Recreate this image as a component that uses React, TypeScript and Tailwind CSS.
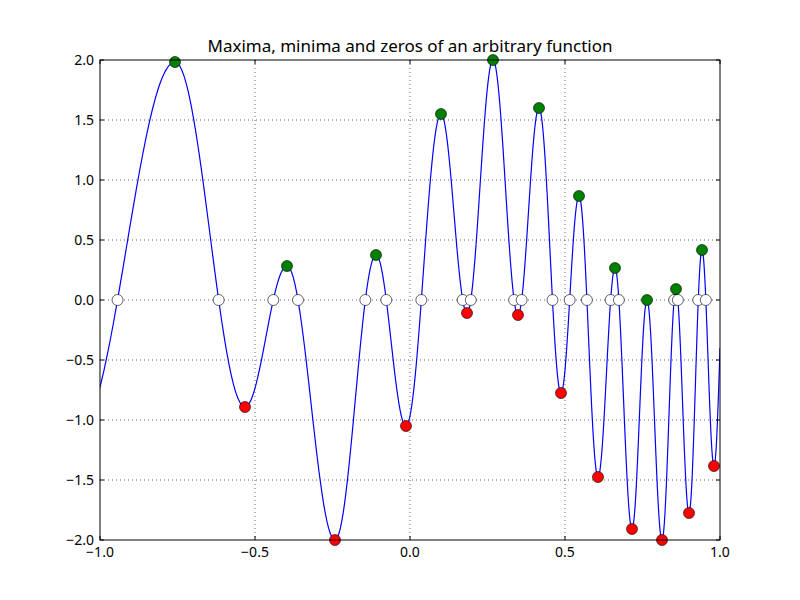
import React from "react";

const pts: [number, number][] = [
  [78, 432], [175, 62], [245, 407], [287, 266], [335, 540], [376, 255], [406, 426],
  [441, 114], [467, 313], [493, 60], [518, 315], [539, 108], [561, 393], [579, 196],
  [598, 477], [615, 268], [632, 529], [647, 300], [662, 540], [676, 289], [689, 513],
  [702, 250], [714, 466], [720, 348],
];

function curve() {
  const out: string[] = [];
  const zeros: number[] = [];
  for (let i = 0; i < pts.length - 1; i++) {
    const [x0, y0] = pts[i];
    const [x1, y1] = pts[i + 1];
    const last = i === pts.length - 2;
    const N = 30;
    for (let k = 0; k <= N; k++) {
      const t = k / N;
      let s = (1 - Math.cos(Math.PI * t)) / 2;
      if (last) s = 1 - Math.cos((Math.PI / 2) * t);
      const x = x0 + (x1 - x0) * t;
      const y = y0 + (y1 - y0) * s;
      out.push(`${out.length ? "L" : "M"}${x.toFixed(2)},${y.toFixed(2)}`);
    }
    if ((y0 - 300) * (y1 - 300) < 0) {
      const s = (300 - y0) / (y1 - y0);
      let t: number;
      if (last) t = (Math.acos(1 - s) * 2) / Math.PI;
      else t = Math.acos(1 - 2 * s) / Math.PI;
      zeros.push(x0 + (x1 - x0) * t);
    }
  }
  return { d: out.join(""), zeros };
}

export default function App() {
  const { d, zeros } = curve();
  const xs = [100, 255, 410, 565, 720];
  const xl = ["\u22121.0", "\u22120.5", "0.0", "0.5", "1.0"];
  const ys = [60, 120, 180, 240, 300, 360, 420, 480, 540];
  const yl = ["2.0", "1.5", "1.0", "0.5", "0.0", "\u22120.5", "\u22121.0", "\u22121.5", "\u22122.0"];
  const extrema = pts.slice(1, -1);
  return (
    <div className="flex w-[800px] h-[600px] bg-white font-['DejaVu_Sans',sans-serif]">
      <svg width="800" height="600" viewBox="0 0 800 600">
        {xs.slice(1, -1).map((x) => (
          <line key={x} x1={x} y1={60} x2={x} y2={540} stroke="#000" strokeWidth="0.6" strokeDasharray="1,3" />
        ))}
        {ys.slice(1, -1).map((y) => (
          <line key={y} x1={100} y1={y} x2={720} y2={y} stroke="#000" strokeWidth="0.6" strokeDasharray="1,3" />
        ))}
        <defs>
          <clipPath id="c"><rect x="100" y="60" width="620" height="480" /></clipPath>
        </defs>
        <g clipPath="url(#c)">
          <path d={d} fill="none" stroke="#0000ff" strokeWidth="1.2" />
        </g>
        {zeros.map((x, i) => (
          <circle key={"z" + i} cx={x} cy={300} r="5.5" fill="#fff" stroke="#000" strokeWidth="0.6" />
        ))}
        {extrema.map(([x, y], i) => (
          <circle key={"e" + i} cx={x} cy={y} r="5.5" fill={i % 2 === 0 ? "#008000" : "#ff0000"} stroke="#000" strokeWidth="0.6" />
        ))}
        <rect x="100" y="60" width="620" height="480" fill="none" stroke="#000" strokeWidth="1" />
        {xs.map((x) => (
          <g key={"tx" + x}>
            <line x1={x} y1={540} x2={x} y2={536} stroke="#000" />
            <line x1={x} y1={60} x2={x} y2={64} stroke="#000" />
          </g>
        ))}
        {ys.map((y) => (
          <g key={"ty" + y}>
            <line x1={100} y1={y} x2={104} y2={y} stroke="#000" />
            <line x1={720} y1={y} x2={716} y2={y} stroke="#000" />
          </g>
        ))}
        {xs.map((x, i) => (
          <text key={"lx" + x} x={x} y={557} fontSize="14" textAnchor="middle" fill="#000">{xl[i]}</text>
        ))}
        {ys.map((y, i) => (
          <text key={"ly" + y} x={94} y={y + 5} fontSize="14" textAnchor="end" fill="#000">{yl[i]}</text>
        ))}
        <text x={410} y={52} fontSize="17" textAnchor="middle" fill="#000">Maxima, minima and zeros of an arbitrary function</text>
      </svg>
    </div>
  );
}
